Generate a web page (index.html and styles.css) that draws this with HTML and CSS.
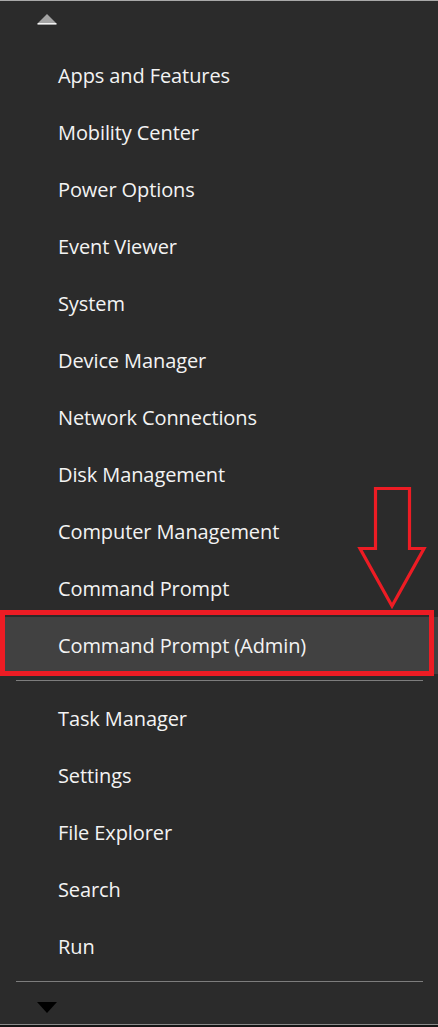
FILE: index.html
```html
<!DOCTYPE html>
<html lang="en">
<head>
<meta charset="utf-8">
<title>Quick Link Menu</title>
<link rel="stylesheet" href="styles.css">
</head>
<body>
<div class="menu">
  <div class="menu-head">
    <svg class="arrow-up" width="20" height="12" viewBox="0 0 20 12">
      <polygon points="10,1 19,10 1,10" fill="#a3a3a3"/>
      <rect x="0.5" y="10" width="19" height="1.6" fill="#f4f4f4"/>
    </svg>
  </div>
  <ul class="group">
    <li class="item">Apps and Features</li>
    <li class="item">Mobility Center</li>
    <li class="item">Power Options</li>
    <li class="item">Event Viewer</li>
    <li class="item">System</li>
    <li class="item">Device Manager</li>
    <li class="item">Network Connections</li>
    <li class="item">Disk Management</li>
    <li class="item">Computer Management</li>
    <li class="item">Command Prompt</li>
    <li class="item item-active">Command Prompt (Admin)</li>
  </ul>
  <div class="sep"><div class="sep-line"></div></div>
  <ul class="group">
    <li class="item">Task Manager</li>
    <li class="item">Settings</li>
    <li class="item">File Explorer</li>
    <li class="item">Search</li>
    <li class="item">Run</li>
  </ul>
  <div class="sep"><div class="sep-line"></div></div>
  <div class="menu-foot">
    <svg class="arrow-down" width="20" height="12" viewBox="0 0 20 12">
      <polygon points="0,0 20,0 10,11" fill="#000"/>
    </svg>
  </div>
  <div class="highlight-box"></div>
  <svg class="pointer" width="438" height="130" viewBox="0 480 438 130">
    <polygon points="375.5,488.5 409.5,488.5 409.5,548.5 424,548.5 392,606 360,548.5 375.5,548.5" fill="none" stroke="#ed1c24" stroke-width="3.2" stroke-linejoin="miter"/>
  </svg>
</div>
<div class="taskbar-edge"></div>
</body>
</html>
```
FILE: styles.css
```css
html, body {
  margin: 0;
  padding: 0;
  background: #2b2b2b;
}
body {
  width: 438px;
  height: 1027px;
  overflow: hidden;
  font-family: "Open Sans", "Noto Sans", "Liberation Sans", sans-serif;
}
.menu {
  position: relative;
  border-top: 1px solid #a9a9a9;
  background: #2b2b2b;
  height: 1023px;
}
.menu-head {
  height: 46px;
  padding-left: 37px;
  box-sizing: border-box;
  padding-top: 12px;
}
.arrow-up, .arrow-down {
  display: block;
}
.group {
  list-style: none;
  margin: 0;
  padding: 0;
}
.item {
  height: 57px;
  box-sizing: border-box;
  display: flex;
  align-items: center;
  padding-left: 58px;
  padding-bottom: 1px;
  color: #f3f3f3;
  font-size: 20px;
  letter-spacing: -0.1px;
}
.item-active {
  background: #414141;
}
.sep {
  height: 16px;
  padding-top: 6px;
  box-sizing: border-box;
}
.sep-line {
  height: 1px;
  margin: 0 15px 0 16px;
  background: #7d7d7d;
}
.menu-foot {
  padding-top: 11px;
  padding-left: 37px;
  height: 32px;
  box-sizing: border-box;
}
.highlight-box {
  position: absolute;
  left: 0;
  top: 609px;
  width: 434px;
  height: 66px;
  border: 5px solid #ed1c24;
  box-sizing: border-box;
}
.pointer {
  position: absolute;
  left: 0;
  top: 479px;
}
.taskbar-edge {
  height: 3px;
  border-top: 1px solid #8c8c8c;
  background: #151515;
  box-sizing: border-box;
}
```
